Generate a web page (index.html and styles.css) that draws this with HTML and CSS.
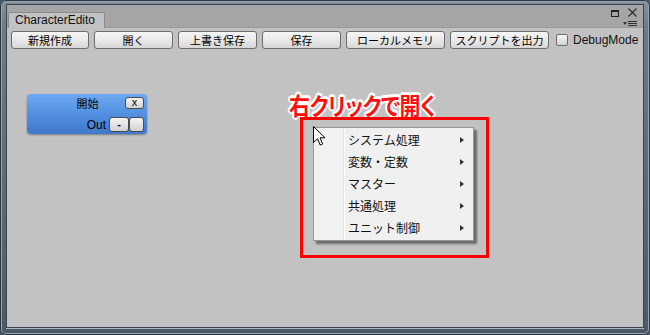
FILE: index.html
```html
<!DOCTYPE html>
<html lang="ja">
<head>
    <meta charset="UTF-8">
    <title>CharacterEditor</title>
    <link rel="stylesheet" href="styles.css">
</head>
<body>

    <div class="window">
        <div class="inner">
            <div class="tabbar">
                <div class="tab">CharacterEdito</div>
                <div class="win-ctrl">
                    <div class="ctrl-top">
                        <span class="max"></span>
                        <svg class="close" width="9" height="9" viewBox="0 0 9 9"><path d="M0.5 0.5 L8.5 8.5 M8.5 0.5 L0.5 8.5" stroke="#2a2a2a" stroke-width="1.1" fill="none"/></svg>
                    </div>
                    <svg class="ctrl-menu" width="14" height="6" viewBox="0 0 14 6">
                        <path d="M0 1 L4 1 L2 4 Z" fill="#333"/>
                        <path d="M5 0.5 H14 M5 2.5 H14 M5 4.5 H14" stroke="#333" stroke-width="1" fill="none"/>
                    </svg>
                </div>
            </div>

            <div class="toolbar">
                <button class="btn">新規作成</button>
                <button class="btn">開く</button>
                <button class="btn">上書き保存</button>
                <button class="btn">保存</button>
                <button class="btn wide">ローカルメモリ</button>
                <button class="btn wide">スクリプトを出力</button>
                <label class="debug"><span class="check"></span>DebugMode</label>
            </div>

            <div class="canvas">
                <div class="node">
                    <div class="node-row">
                        <span class="node-title">開始</span>
                        <span class="mini-btn close-btn">x</span>
                    </div>
                    <div class="node-row out-row">
                        <span class="out">Out</span>
                        <span class="mini-btn minus-btn">-</span>
                        <span class="mini-btn blank-btn"></span>
                    </div>
                </div>

                <div class="note">右クリックで開く</div>
                <div class="highlight"></div>

                <div class="menu">
                    <div class="menu-item">システム処理<span class="arrow"></span></div>
                    <div class="menu-item">変数・定数<span class="arrow"></span></div>
                    <div class="menu-item">マスター<span class="arrow"></span></div>
                    <div class="menu-item">共通処理<span class="arrow"></span></div>
                    <div class="menu-item">ユニット制御<span class="arrow"></span></div>
                    <!-- mouse pointer where the right click happened -->
                    <svg class="cursor" width="13" height="20" viewBox="0 0 13 20">
                        <path d="M0.5 0.5 L0.5 16.5 L4.5 12.8 L7.2 19 L9.6 18 L7 11.8 L12 11.8 Z" fill="#fff" stroke="#000" stroke-width="1" stroke-linejoin="miter"/>
                    </svg>
                </div>
            </div>
        </div>
    </div>

</body>
</html>
```

FILE: styles.css
```css
body {
    margin: 0;
    padding: 0;
    font-family: "Liberation Sans", "Noto Sans CJK JP", sans-serif;
    background-color: #4a5866;
}
.window {
    width: 650px;
    height: 335px;
    box-sizing: border-box;
    padding: 5px 7px 8px 7px;
    background: linear-gradient(180deg, #8593a0 0%, #6d7b89 8%, #5a6876 60%, #4b5967 100%);
    border-radius: 6px;
    box-shadow: inset 0 0 0 1px #2b333d, inset 0 0 0 2px #98a6b3;
}
.inner {
    height: 100%;
    display: flex;
    flex-direction: column;
    background-color: #c2c2c2;
    box-shadow: 0 0 0 1px #3a4550, 0 1px 0 1px #aab6c1;
}
.tabbar {
    height: 23px;
    display: flex;
    align-items: flex-end;
    padding-left: 1px;
    background-color: #a5a5a5;
    border-bottom: 1px solid #9a9a9a;
    box-sizing: border-box;
}
.tab {
    height: 16px;
    width: 97px;
    box-sizing: border-box;
    padding-left: 6px;
    font-size: 12px;
    line-height: 15px;
    color: #111;
    background-color: #c2c2c2;
    border: 1px solid #8a8a8a;
    border-bottom: none;
    border-radius: 2px 2px 0 0;
    margin-bottom: -1px;
}
.win-ctrl {
    margin-left: auto;
    align-self: stretch;
    display: flex;
    flex-direction: column;
    align-items: flex-end;
    padding: 3px 6px 0 0;
}
.ctrl-top {
    display: flex;
    align-items: center;
    gap: 9px;
}
.max {
    width: 6px;
    height: 4px;
    border: 1px solid #222;
    border-top-width: 2px;
    margin-top: 1px;
}
.ctrl-menu {
    margin-top: 4px;
}
.toolbar {
    display: flex;
    align-items: center;
    gap: 5px;
    padding: 3px 0 0 4px;
    height: 21px;
    box-sizing: border-box;
}
.btn {
    width: 79px;
    height: 18px;
    padding: 0;
    font-family: "Noto Sans CJK JP", sans-serif;
    font-size: 11px;
    line-height: 16px;
    color: #000;
    background: linear-gradient(180deg, #f6f6f6 0%, #e9e9e9 50%, #d6d6d6 100%);
    border: 1px solid #6c6c6c;
    border-radius: 3px;
}
.btn:first-child {
    width: 78px;
}
.btn.wide {
    width: 99px;
}
.debug {
    display: flex;
    align-items: center;
    gap: 5px;
    margin-left: 2px;
    font-size: 12px;
    color: #111;
}
.check {
    width: 12px;
    height: 12px;
    box-sizing: border-box;
    border: 1px solid #6c6c6c;
    border-radius: 2px;
    background: linear-gradient(180deg, #f4f4f4, #d4d4d4);
}
.canvas {
    flex: 1;
    position: relative;
}
.node {
    position: absolute;
    left: 20px;
    top: 45px;
    width: 120px;
    height: 40px;
    box-sizing: border-box;
    padding: 3px 3px 0 3px;
    border-radius: 4px;
    background: linear-gradient(180deg, #6eaaf2 0%, #5592e2 45%, #3f78cc 100%);
    box-shadow: 0 1px 2px rgba(0, 0, 0, 0.35);
    display: flex;
    flex-direction: column;
    gap: 8px;
}
.node-row {
    display: flex;
    align-items: center;
    height: 12px;
}
.node-title {
    flex: 1;
    text-align: center;
    padding-left: 20px;
    font-family: "Noto Sans CJK JP", sans-serif;
    font-size: 11px;
    color: #000;
}
.out-row {
    justify-content: flex-end;
    height: 15px;
}
.out {
    font-size: 12px;
    color: #000;
    margin-right: 3px;
}
.mini-btn {
    box-sizing: border-box;
    height: 100%;
    display: flex;
    align-items: center;
    justify-content: center;
    font-size: 11px;
    line-height: 1;
    color: #000;
    background: linear-gradient(180deg, #f4f4f4, #d2d2d2);
    border: 1px solid #4a4a4a;
    border-radius: 3px;
}
.close-btn {
    width: 19px;
    padding-bottom: 2px;
}
.minus-btn {
    width: 20px;
    font-weight: bold;
}
.blank-btn {
    width: 15px;
}
.note {
    position: absolute;
    left: 282px;
    top: 38px;
    font-family: "Noto Sans CJK JP", sans-serif;
    font-weight: bold;
    font-size: 21px;
    font-feature-settings: "palt";
    letter-spacing: -0.5px;
    color: #ff1010;
    transform: scaleY(1.15);
    transform-origin: left top;
    text-shadow:
        2px 0 0 #fff, -2px 0 0 #fff, 0 2px 0 #fff, 0 -2px 0 #fff,
        1.5px 1.5px 0 #fff, -1.5px 1.5px 0 #fff, 1.5px -1.5px 0 #fff, -1.5px -1.5px 0 #fff;
}
.highlight {
    position: absolute;
    left: 293px;
    top: 68px;
    width: 189px;
    height: 141px;
    box-sizing: border-box;
    border: 3px solid #ff0000;
}
.menu {
    position: absolute;
    left: 306px;
    top: 78px;
    width: 161px;
    height: 114px;
    box-sizing: border-box;
    padding: 1px 0;
    background: linear-gradient(90deg, #f1f1f1 0, #f1f1f1 29px, #e2e3e3 29px, #e2e3e3 30px, #ffffff 30px, #ffffff 31px, #f0f0f0 31px);
    border: 1px solid #979797;
    box-shadow: 3px 3px 2px rgba(0, 0, 0, 0.45);
}
.menu-item {
    height: 22px;
    line-height: 22px;
    padding-left: 34px;
    font-family: "Noto Sans CJK JP", sans-serif;
    font-size: 12px;
    color: #111;
    position: relative;
}
.arrow {
    position: absolute;
    left: 146px;
    top: 8px;
    width: 0;
    height: 0;
    border-top: 3.5px solid transparent;
    border-bottom: 3.5px solid transparent;
    border-left: 4px solid #333;
}
.cursor {
    position: absolute;
    left: -1px;
    top: -2px;
}
```
